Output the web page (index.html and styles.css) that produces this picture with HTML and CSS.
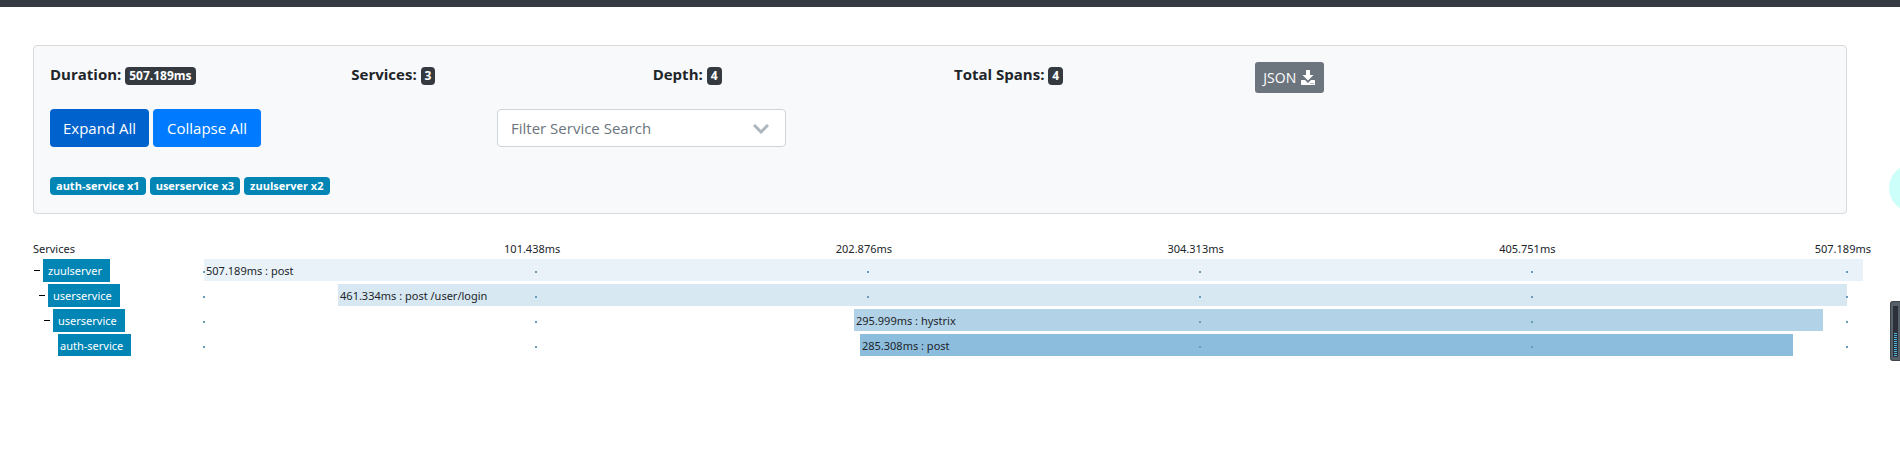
FILE: index.html
```
<!DOCTYPE html>
<html lang="en">
<head>
<meta charset="utf-8">
<title>Trace</title>
<link rel="stylesheet" href="styles.css">
</head>
<body>
<header class="navbar"></header>
<main class="page">
  <section class="card">
    <div class="summary">
      <div class="stat">Duration: <span class="badge dark">507.189ms</span></div>
      <div class="stat">Services: <span class="badge dark">3</span></div>
      <div class="stat">Depth: <span class="badge dark">4</span></div>
      <div class="stat">Total Spans: <span class="badge dark">4</span></div>
      <div><button class="btn json" type="button">JSON
        <svg class="download" viewBox="0 0 16 16" aria-hidden="true"><path fill="currentColor" d="M6 0h4v5h3.500L8 10.500 2.500 5H6z"/><path fill="currentColor" fill-rule="evenodd" d="M1.500 10H5l3 3 3-3h3.500l.5.5v4l-.5.5h-13l-.5-.5v-4zM10.500 13v1h1v-1zM12.500 13v1h1v-1z"/></svg></button></div>
    </div>
    <div class="controls">
      <div class="buttons">
        <button class="btn primary active" type="button">Expand All</button>
        <button class="btn primary" type="button">Collapse All</button>
      </div>
      <div class="filter">
        <select class="select" aria-label="Filter Service Search"><option>Filter Service Search</option></select>
        <svg class="chevron" viewBox="0 0 16 10" aria-hidden="true"><path d="M1 1l7 7 7-7" fill="none" stroke="#adb5bd" stroke-width="3"/></svg>
      </div>
    </div>
    <div class="services">
      <span class="badge teal">auth-service x1</span>
      <span class="badge teal">userservice x3</span>
      <span class="badge teal">zuulserver x2</span>
    </div>
  </section>

  <section class="timeline">
    <div class="row head">
      <div>Services</div>
      <div class="axis"><span>101.438ms</span><span>202.876ms</span><span>304.313ms</span><span>405.751ms</span><span>507.189ms</span></div>
    </div>
    <div class="row">
      <div class="name depth-0"><button class="toggle" type="button" aria-label="Collapse zuulserver"></button><span class="tag">zuulserver</span></div>
      <div class="track"><div class="bar shade-0" style="margin-left:0%;width:100%">507.189ms : post</div><div class="dots"><i></i><i></i><i></i><i></i><i></i><i></i></div></div>
    </div>
    <div class="row">
      <div class="name depth-1"><button class="toggle" type="button" aria-label="Collapse userservice"></button><span class="tag">userservice</span></div>
      <div class="track"><div class="bar shade-1" style="margin-left:8.08%;width:90.96%">461.334ms : post /user/login</div><div class="dots"><i></i><i></i><i></i><i></i><i></i><i></i></div></div>
    </div>
    <div class="row">
      <div class="name depth-2"><button class="toggle" type="button" aria-label="Collapse userservice"></button><span class="tag">userservice</span></div>
      <div class="track"><div class="bar shade-2" style="margin-left:39.18%;width:58.41%">295.999ms : hystrix</div><div class="dots"><i></i><i></i><i class="covered"></i><i></i><i></i><i></i></div></div>
    </div>
    <div class="row">
      <div class="name depth-3"><span class="tag leaf">auth-service</span></div>
      <div class="track"><div class="bar shade-3" style="margin-left:39.54%;width:56.24%">285.308ms : post</div><div class="dots"><i></i><i></i><i class="covered"></i><i></i><i></i><i></i></div></div>
    </div>
  </section>
</main>
<div class="bubble"></div>
<div class="meter"><div class="slot"><div class="level"></div></div></div>
</body>
</html>
```
FILE: styles.css
```
* { box-sizing: border-box; }
body {
  margin: 0;
  background: #fff;
  color: #212529;
  font: 15px/24px "Open Sans", "Noto Sans", sans-serif;
  overflow-x: hidden;
}
button, select { font: inherit; }
.navbar { height: 7px; background: #363a43; }
.page { padding: 38px 37px 0 33px; }

.card {
  margin-right: 16px;
  padding: 16px 0 18px 16px;
  background: #f8f9fa;
  border: 1px solid #d8dadc;
  border-radius: 4px;
}
.summary {
  display: grid;
  grid-template-columns: repeat(6, 1fr);
  margin-right: -12px;
}
.stat { font-weight: 700; }
.badge {
  display: inline-block;
  height: 18px;
  padding: 0 4px;
  border-radius: 4px;
  color: #fff;
  font-size: 12px;
  line-height: 18px;
  font-weight: 700;
}
.dark { background: #343a40; }
.teal { padding: 0 6px; background: #0085b5; font-size: 11px; }
.btn {
  display: block;
  border: 0;
  border-radius: 4px;
  color: #fff;
  white-space: nowrap;
}
.json {
  display: flex;
  align-items: center;
  gap: 4px;
  height: 31px;
  padding: 0 8px;
  border-radius: 3px;
  background: #6c757d;
  font-size: 14px;
}
.download { width: 16px; height: 16px; }

.controls {
  display: grid;
  grid-template-columns: 447px 289px;
  margin-top: 16px;
}
.buttons { display: flex; gap: 4px; }
.primary { height: 38px; padding: 0 14px; background: #007bff; }
.active { padding: 0 13px; background: #0062cc; }
.filter { position: relative; }
.select {
  width: 100%;
  height: 38px;
  padding: 0 13px;
  border: 1px solid #ced4da;
  border-radius: 4px;
  background: #fff;
  color: #6c757d;
  appearance: none;
}
.chevron {
  position: absolute;
  top: 15px;
  right: 17px;
  width: 16px;
  height: 10px;
  pointer-events: none;
}
.services { display: flex; gap: 4px; margin-top: 30px; }

.timeline {
  margin-top: 25px;
  font: 11px/20px "Noto Sans", "Open Sans", sans-serif;
}
.row {
  display: grid;
  grid-template-columns: 171px 1fr;
  height: 25px;
}
.head { height: 20px; }
.axis {
  display: grid;
  grid-template-columns: 18% repeat(3, 19.9%) 1fr auto;
  margin-right: -8px;
}
.axis span:first-child { grid-column: 2; }
.name { display: flex; align-items: flex-start; }
.depth-1 { padding-left: 5px; }
.depth-2 { padding-left: 10px; }
.depth-3 { padding-left: 25px; }
.toggle {
  width: 6px;
  height: 1px;
  margin: 11px 3px 0 1px;
  padding: 0;
  border: 0;
  background: #000;
}
.tag {
  height: 23px;
  padding: 0 8px 0 5px;
  background: #0085b5;
  color: #fff;
  line-height: 23px;
}
.leaf { height: 22px; padding-left: 2px; }
.track { position: relative; }
.bar {
  height: 22px;
  padding-left: 2px;
  line-height: 23px;
  white-space: nowrap;
}
.shade-0 { background: #eaf2f9; }
.shade-1 { background: #d8e8f2; }
.shade-2 { background: #b2d2e7; }
.shade-3 { background: #8dbddd; }
.dots {
  position: absolute;
  inset: 12px 0 auto -1px;
  display: grid;
  grid-template-columns: repeat(4, 20%) 1fr 17px;
}
.dots i { width: 2px; height: 2px; background: #6a9cba; }
.dots .covered { visibility: hidden; }

.bubble {
  position: fixed;
  top: 164px;
  right: -37px;
  width: 48px;
  height: 48px;
  border-radius: 50%;
  background: #ccfffa;
}
.meter {
  position: fixed;
  top: 301px;
  right: 0;
  width: 10px;
  height: 60px;
  padding: 4px 2px 3px;
  border: 1px solid #3f444c;
  border-right: 0;
  border-radius: 3px 0 0 3px;
  background: #566069;
}
.slot { display: flex; align-items: flex-end; height: 100%; padding: 0 1px; background: #2c303a; }
.level {
  width: 100%;
  height: 24px;
  background: repeating-linear-gradient(#4bb4dc 0 1px, #2c303a 1px 2px);
}
```
